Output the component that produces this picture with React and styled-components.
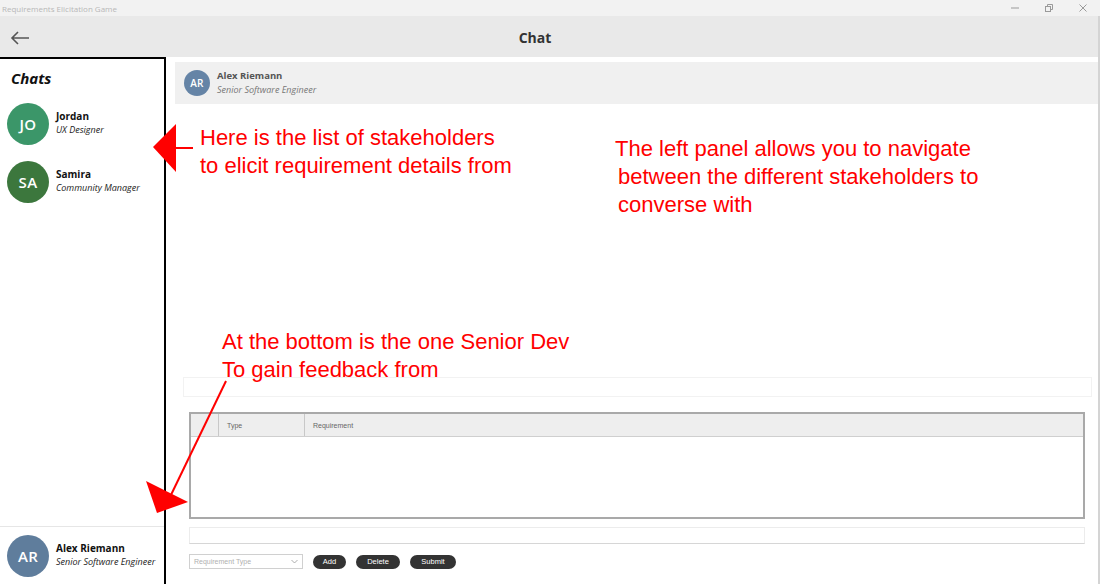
import React from "react";
import styled, { createGlobalStyle } from "styled-components";

const GlobalStyle = createGlobalStyle`
  html, body {
    margin: 0;
    padding: 0;
    background: #ffffff;
    font-family: "Open Sans", "Noto Sans", sans-serif;
  }
`;

//  Window chrome
const Window = styled.div`
  position: relative;
  width: 1100px;
  height: 584px;
  overflow: hidden;
  display: flex;
  flex-direction: column;
  background: #ffffff;
`;

const TitleBar = styled.div`
  height: 16px;
  flex: none;
  display: flex;
  align-items: center;
  justify-content: space-between;
  background: #f2f2f2;
  padding-left: 2px;
`;

const TitleText = styled.span`
  font-size: 8px;
  color: #b8b8b8;
`;

const WinControls = styled.div`
  display: flex;
  align-items: center;
  height: 16px;
`;

const WinButton = styled.div`
  width: 34px;
  height: 16px;
  display: flex;
  align-items: center;
  justify-content: center;
  color: #9a9a9a;
`;

const Frame = styled.div`
  flex: 1;
  display: flex;
  flex-direction: column;
  border-right: 2px solid #d4d4d4;
  min-height: 0;
`;

const Header = styled.div`
  height: 41px;
  flex: none;
  display: grid;
  grid-template-columns: 48px 1fr 76px;
  align-items: center;
  background: #e9e9e9;
`;

const BackButton = styled.div`
  display: flex;
  align-items: center;
  justify-content: center;
  padding-right: 8px;
  padding-top: 2px;
  color: #555555;
`;

const HeaderTitle = styled.div`
  text-align: center;
  font-size: 14px;
  font-weight: 700;
  color: #333333;
  padding-top: 2px;
`;

const Body = styled.div`
  flex: 1;
  display: flex;
  min-height: 0;
`;

//  Left panel
const Sidebar = styled.aside`
  width: 164px;
  flex: none;
  display: flex;
  flex-direction: column;
  border-top: 2px solid #000000;
  border-right: 2px solid #000000;
`;

const SideTitle = styled.h2`
  margin: 0;
  height: 36px;
  padding: 9px 0 0 11px;
  box-sizing: border-box;
  font-size: 15px;
  line-height: 20px;
  font-weight: 700;
  font-style: italic;
  color: #111111;
`;

const ChatList = styled.div`
  flex: 1;
  display: flex;
  flex-direction: column;
`;

const ChatItem = styled.div`
  height: 58px;
  display: flex;
  align-items: center;
  gap: 7px;
  padding-left: 7px;
  box-sizing: border-box;
  border-top: ${p => (p.divided ? "1px solid #e6e6e6" : "none")};
`;

const Avatar = styled.div`
  width: ${p => p.size}px;
  height: ${p => p.size}px;
  flex: none;
  border-radius: 50%;
  background: ${p => p.color};
  color: #ffffff;
  display: flex;
  align-items: center;
  justify-content: center;
  font-size: ${p => (p.size > 30 ? 15 : 10)}px;
  font-weight: 600;
  letter-spacing: 0.3px;
`;

const PersonText = styled.div`
  display: flex;
  flex-direction: column;
  line-height: 14px;
  padding-bottom: ${p => (p.small ? 0 : 2)}px;
`;

const PersonName = styled.span`
  font-size: ${p => (p.small ? 9.5 : 10)}px;
  font-weight: 700;
  color: ${p => (p.small ? "#555555" : "#111111")};
`;

const PersonRole = styled.span`
  font-size: 9px;
  font-style: italic;
  color: ${p => (p.small ? "#777777" : "#222222")};
`;

//  Main panel
const Main = styled.main`
  flex: 1;
  display: flex;
  flex-direction: column;
  padding: 5px 0 15px 9px;
  min-width: 0;
`;

const ContactCard = styled.div`
  height: 42px;
  flex: none;
  display: flex;
  align-items: center;
  gap: 7px;
  padding-left: 9px;
  background: #f0f0f0;
`;

const ChatArea = styled.div`
  flex: 1;
`;

const MessageBox = styled.div`
  height: 20px;
  flex: none;
  margin: 0 6px 15px 8px;
  border: 1px solid #f2f2f2;
  box-sizing: border-box;
`;

const Table = styled.div`
  height: 107px;
  flex: none;
  margin: 0 13px 8px 14px;
  border: 2px solid #a9a9a9;
  box-sizing: border-box;
  display: flex;
  flex-direction: column;
`;

const TableHead = styled.div`
  height: 22px;
  display: grid;
  grid-template-columns: 28px 86px 1fr;
  background: #eeeeee;
  border-bottom: 1px solid #cfcfcf;
`;

const HeadCell = styled.div`
  display: flex;
  align-items: center;
  padding-left: 8px;
  font-family: "Liberation Sans", Arial, sans-serif;
  font-size: 7px;
  color: #666666;
  border-right: ${p => (p.last ? "none" : "1px solid #c8c8c8")};
`;

const TextInput = styled.div`
  height: 17px;
  flex: none;
  margin: 0 13px 10px 14px;
  border: 1px solid #ececec;
  border-bottom-color: #d6d6d6;
  box-sizing: border-box;
`;

const Controls = styled.div`
  height: 15px;
  flex: none;
  display: flex;
  align-items: center;
  gap: 10px;
  padding-left: 14px;
`;

const Select = styled.div`
  width: 114px;
  height: 15px;
  box-sizing: border-box;
  border: 1px solid #d0d0d0;
  display: flex;
  align-items: center;
  justify-content: space-between;
  padding: 0 4px;
  font-family: "Liberation Sans", Arial, sans-serif;
  font-size: 7px;
  color: #b0b0b0;
`;

const PillButton = styled.div`
  width: ${p => p.width}px;
  height: 14px;
  border-radius: 7px;
  background: #333333;
  color: #ffffff;
  display: flex;
  align-items: center;
  justify-content: center;
  font-family: "Liberation Sans", Arial, sans-serif;
  font-size: 7.5px;
`;

//  Annotation overlay
const Overlay = styled.svg`
  position: absolute;
  left: 0;
  top: 0;
  pointer-events: none;
`;

const Note = styled.div`
  position: absolute;
  left: ${p => p.x}px;
  top: ${p => p.y}px;
  font-family: "Liberation Sans", Arial, sans-serif;
  font-size: 22px;
  line-height: 28px;
  color: #ff0000;
  white-space: nowrap;
`;

const NoteLine = styled.div`
  padding-left: ${p => p.indent || 0}px;
`;

const contacts = [
  { initials: "JO", name: "Jordan", role: "UX Designer", color: "#3b9669" },
  { initials: "SA", name: "Samira", role: "Community Manager", color: "#3c773d" }
];

function App() {
  return (
    <>
      <GlobalStyle />
      <Window>
        <TitleBar>
          <TitleText>Requirements Elicitation Game</TitleText>
          <WinControls>
            <WinButton>
              <svg width="10" height="10" viewBox="0 0 10 10">
                <path d="M1 5h8" stroke="currentColor" strokeWidth="1" />
              </svg>
            </WinButton>
            <WinButton>
              <svg width="10" height="10" viewBox="0 0 10 10" fill="none" stroke="currentColor" strokeWidth="1">
                <rect x="1.5" y="3.5" width="5" height="5" />
                <path d="M3.5 3.5V1.5h5v5h-2" />
              </svg>
            </WinButton>
            <WinButton>
              <svg width="10" height="10" viewBox="0 0 10 10" stroke="currentColor" strokeWidth="1">
                <path d="M1.5 1.5l7 7M8.5 1.5l-7 7" />
              </svg>
            </WinButton>
          </WinControls>
        </TitleBar>

        <Frame>
          <Header>
            <BackButton>
              <svg width="20" height="14" viewBox="0 0 20 14" fill="none" stroke="currentColor" strokeWidth="1.6">
                <path d="M19 7H2M8 1L2 7l6 6" />
              </svg>
            </BackButton>
            <HeaderTitle>Chat</HeaderTitle>
            <div />
          </Header>

          <Body>
            <Sidebar>
              <SideTitle>Chats</SideTitle>
              <ChatList>
                {contacts.map(c => (
                  <ChatItem key={c.initials}>
                    <Avatar size={42} color={c.color}>{c.initials}</Avatar>
                    <PersonText>
                      <PersonName>{c.name}</PersonName>
                      <PersonRole>{c.role}</PersonRole>
                    </PersonText>
                  </ChatItem>
                ))}
              </ChatList>
              <ChatItem divided>
                <Avatar size={42} color="#5f7d9c">AR</Avatar>
                <PersonText>
                  <PersonName>Alex Riemann</PersonName>
                  <PersonRole>Senior Software Engineer</PersonRole>
                </PersonText>
              </ChatItem>
            </Sidebar>

            <Main>
              <ContactCard>
                <Avatar size={26} color="#6584a6">AR</Avatar>
                <PersonText small>
                  <PersonName small>Alex Riemann</PersonName>
                  <PersonRole small>Senior Software Engineer</PersonRole>
                </PersonText>
              </ContactCard>
              <ChatArea />
              <MessageBox />
              <Table>
                <TableHead>
                  <HeadCell />
                  <HeadCell>Type</HeadCell>
                  <HeadCell last>Requirement</HeadCell>
                </TableHead>
              </Table>
              <TextInput />
              <Controls>
                <Select>
                  <span>Requirement Type</span>
                  <svg width="7" height="5" viewBox="0 0 7 5" fill="none" stroke="#999" strokeWidth="0.8">
                    <path d="M0.5 1l3 3 3-3" />
                  </svg>
                </Select>
                <PillButton width={33}>Add</PillButton>
                <PillButton width={44}>Delete</PillButton>
                <PillButton width={46}>Submit</PillButton>
              </Controls>
            </Main>
          </Body>
        </Frame>

        <Overlay width="1100" height="584" viewBox="0 0 1100 584">
          <polygon points="153,147 176,124 176,172" fill="#ff0000" />
          <path d="M175 148H193" stroke="#ff0000" strokeWidth="2" />
          <path d="M226 381L170 497" stroke="#ff0000" strokeWidth="2" />
          <polygon points="146,481 157,513 188,502" fill="#ff0000" />
        </Overlay>

        <Note x={200} y={124}>
          <NoteLine>Here is the list of stakeholders</NoteLine>
          <NoteLine>to elicit requirement details from</NoteLine>
        </Note>
        <Note x={615} y={135}>
          <NoteLine>The left panel allows you to navigate</NoteLine>
          <NoteLine indent={3}>between the different stakeholders to</NoteLine>
          <NoteLine indent={3}>converse with</NoteLine>
        </Note>
        <Note x={222} y={328}>
          <NoteLine>At the bottom is the one Senior Dev</NoteLine>
          <NoteLine>To gain feedback from</NoteLine>
        </Note>
      </Window>
    </>
  );
}

export default App;
